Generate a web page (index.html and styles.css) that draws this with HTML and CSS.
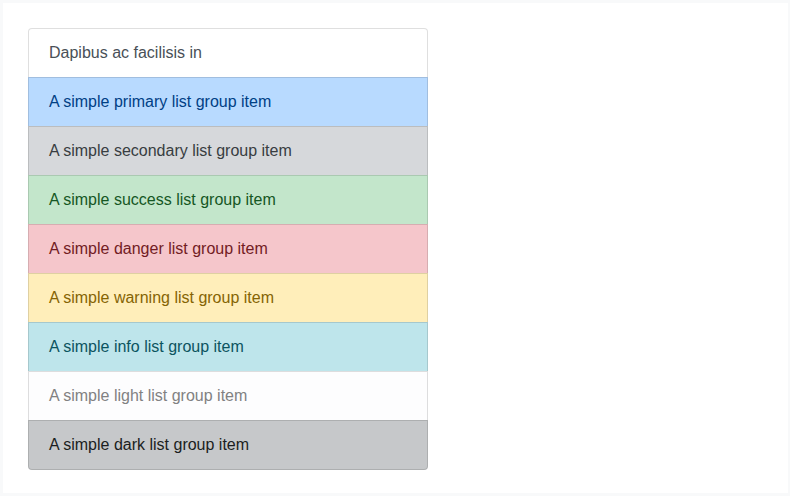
FILE: index.html
```html
<!DOCTYPE html>
<html>
<head>
<meta charset="utf-8">
<link rel="stylesheet" href="styles.css">
</head>
<body>
<div class="frame">
  <ul class="list-group">
    <li class="item">Dapibus ac facilisis in</li>
    <li class="item primary">A simple primary list group item</li>
    <li class="item secondary">A simple secondary list group item</li>
    <li class="item success">A simple success list group item</li>
    <li class="item danger">A simple danger list group item</li>
    <li class="item warning">A simple warning list group item</li>
    <li class="item info">A simple info list group item</li>
    <li class="item light">A simple light list group item</li>
    <li class="item dark">A simple dark list group item</li>
  </ul>
</div>
</body>
</html>
```
FILE: styles.css
```css
html, body {
  margin: 0;
  padding: 0;
  height: 100%;
}
body {
  background: #f8f9fa;
  font-family: "Liberation Sans", Arial, sans-serif;
  font-size: 16px;
  line-height: 1.5;
  color: #212529;
  padding: 3px 2px 3px 3px;
  box-sizing: border-box;
}
.frame {
  background: #fff;
  height: 100%;
  padding: 25px 25px;
  box-sizing: border-box;
}
.list-group {
  list-style: none;
  margin: 0;
  padding: 0;
  width: 400px;
  display: flex;
  flex-direction: column;
}
.item {
  padding: 12px 20px;
  border: 1px solid rgba(0, 0, 0, 0.125);
  margin-bottom: -1px;
  background: #fff;
  color: #495057;
}
.item:first-child {
  border-top-left-radius: 4px;
  border-top-right-radius: 4px;
}
.item:last-child {
  margin-bottom: 0;
  border-bottom-left-radius: 4px;
  border-bottom-right-radius: 4px;
}
.primary { background: #b8daff; color: #004085; }
.secondary { background: #d6d8db; color: #383d41; }
.success { background: #c3e6cb; color: #155724; }
.danger { background: #f5c6cb; color: #721c24; }
.warning { background: #ffeeba; color: #856404; }
.info { background: #bee5eb; color: #0c5460; }
.light { background: #fdfdfe; color: #818182; }
.dark { background: #c6c8ca; color: #1b1e21; }
```
